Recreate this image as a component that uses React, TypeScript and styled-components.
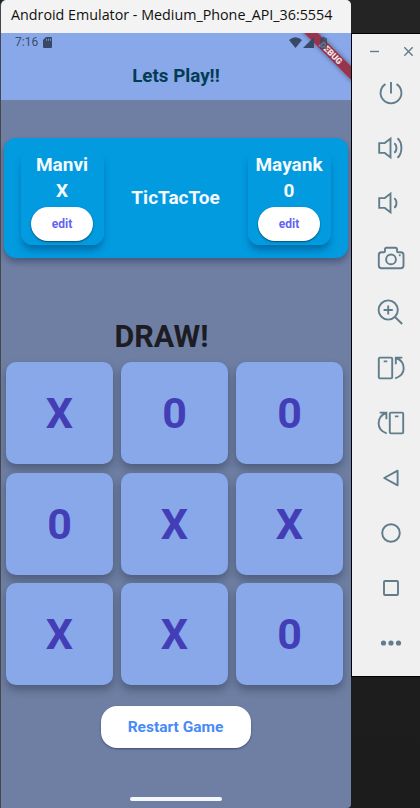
import React from "react";
import styled, { createGlobalStyle } from "styled-components";

const GlobalStyle = createGlobalStyle`
  * { box-sizing: border-box; }
  body { margin: 0; background: #1e1e1e; overflow: hidden; }
`;

const Desktop = styled.div`
  display: flex;
  align-items: flex-start;
  width: 420px;
  height: 808px;
  overflow: hidden;
  background: linear-gradient(#242424, #1c1c1c);
`;

const EmulatorWindow = styled.main`
  display: flex;
  flex-direction: column;
  flex: none;
  width: 351px;
  height: 808px;
  border-left: 1px solid #47474b;
  border-radius: 6px 5px 4px 0;
  overflow: hidden;
  background: #6e7fa3;
  font-family: Roboto, sans-serif;
`;

const TitleBar = styled.header`
  flex: none;
  height: 33px;
  padding-left: 10px;
  background: #f3f3f3;
  color: #101010;
  font: 400 14.3px/30px "Open Sans", "Noto Sans", sans-serif;
  white-space: nowrap;
`;

const Screen = styled.section`
  position: relative;
  display: flex;
  flex-direction: column;
  align-items: center;
  flex: 1;
  overflow: hidden;
`;

const AppBar = styled.div`
  flex: none;
  width: 100%;
  height: 67px;
  background: #88a8ea;
`;

const StatusBar = styled.div`
  position: relative;
  z-index: 1;
  display: flex;
  align-items: center;
  height: 19px;
  padding: 0 24px 0 14px;
  color: #3e4d6c;
  font-size: 12px;
  line-height: 19px;
  letter-spacing: 0px;
`;

const StatusIcon = styled.svg<{ $gap?: number }>`
  display: block;
  flex: none;
  margin-left: ${(p) => p.$gap ?? 0}px;
  fill: #394864;
`;

const Spacer = styled.span`
  flex: 1;
`;

const AppTitle = styled.h1`
  margin: 0;
  padding-top: 13px;
  color: #033c53;
  font-size: 18.8px;
  line-height: 22px;
  font-weight: 700;
  text-align: center;
`;

const DebugRibbon = styled.div`
  position: absolute;
  top: 14.5px;
  right: -32px;
  width: 104px;
  height: 10px;
  transform: rotate(45deg);
  background: rgba(151, 38, 56, 0.88);
  box-shadow: 0 0 5px rgba(0, 0, 0, 0.4);
  color: #f3e6ea;
  font-size: 8.7px;
  line-height: 10px;
  font-weight: 900;
  text-align: center;
`;

const ScoreCard = styled.section`
  display: flex;
  flex: none;
  align-items: center;
  justify-content: space-between;
  width: 344px;
  height: 120px;
  margin-top: 38px;
  margin-right: 1px;
  padding: 0 17px 0 17px;
  border-radius: 12px;
  background: #029be0;
  box-shadow: 0 4px 6px rgba(30, 40, 75, 0.45);
`;

const PlayerBox = styled.div`
  display: flex;
  flex-direction: column;
  align-items: center;
  width: 83px;
  height: 95px;
  margin-top: -2px;
  padding-top: 2px;
  border-radius: 12px;
  background: linear-gradient(#029be0, #029be0);
  box-shadow: 0 6px 7px -1px rgba(0, 40, 90, 0.4);
`;

const CardText = styled.div`
  color: #f4faff;
  font-size: 19px;
  line-height: 26px;
  font-weight: 700;
`;

const EditButton = styled.button`
  width: 62px;
  height: 34px;
  margin-top: 3.5px;
  padding: 0;
  border: 0;
  border-radius: 17px;
  background: #fff;
  box-shadow: 0 1px 2px rgba(0, 0, 0, 0.5);
  color: #6363f4;
  font: 700 12px/34px Roboto, sans-serif;
`;

const Result = styled.h2`
  flex: none;
  margin: 58px 29px 0 0;
  height: 46px;
  color: #1d1c23;
  font-size: 30.5px;
  line-height: 41px;
  font-weight: 700;
`;

const Board = styled.section`
  display: grid;
  flex: none;
  grid-template-columns: repeat(3, 106.5px);
  grid-template-rows: repeat(3, 102px);
  gap: 8.5px;
  margin-right: 3px;
`;

const Cell = styled.button`
  padding: 0;
  border: 0;
  border-radius: 10px;
  background: #88a8ea;
  box-shadow: 0 5px 8px rgba(40, 50, 75, 0.45);
  color: #433eb6;
  font: 700 43px/100px Roboto, sans-serif;
`;

const RestartButton = styled.button`
  flex: none;
  width: 150px;
  height: 42px;
  margin: 21px 1px 0 0;
  padding: 0;
  border: 0;
  border-radius: 16px;
  background: #fff;
  box-shadow: 0 1px 2px rgba(20, 30, 60, 0.5);
  color: #488af8;
  font: 700 15.5px/42px Roboto, sans-serif;
`;

const HomeIndicator = styled.div`
  flex: none;
  width: 92px;
  height: 4px;
  margin: auto 0 7px;
  border-radius: 2px;
  background: #f5f6fa;
`;

const SidePanel = styled.aside`
  display: flex;
  flex: none;
  flex-direction: column;
  width: 69px;
  height: 644px;
  margin-top: 33px;
  border: 1px solid #000;
  border-right: 0;
  background: #f0f0f0;
`;

const Glyph = styled.svg<{ $width: number }>`
  display: block;
  flex: none;
  fill: none;
  stroke: #607d8b;
  stroke-width: ${(p) => p.$width};
`;

const WindowControls = styled.div`
  display: flex;
  flex: none;
  justify-content: space-between;
  height: 44px;
  padding: 12px 6px 0 17px;
`;

const ToolList = styled.div`
  display: flex;
  flex-direction: column;
  gap: 25px;
  padding-left: 24px;
`;

const Speaker = () => <path d="M3.2 10.1h5.6l5.7-4.5v18.8l-5.7-4.5H3.2zM18.2 10.2c3 1.8 3 7.8 0 9.6" />;

const tools = [
  <path key="power" d="M9.5 6.1a10.4 10.4 0 1 0 11 0M15 4v11.5" />,
  <g key="up"><Speaker /><path d="M21.5 5.2c5.2 4.2 5.2 15.4 0 19.6" /></g>,
  <Speaker key="down" />,
  <g key="camera">
    <path d="M5.5 9.3h2.3c1 0 1.2-.4 1.2-1.4V6.3c0-1.2.4-1.6 1.5-1.6h9c1.1 0 1.5.4 1.5 1.6v1.6c0 1 .2 1.4 1.2 1.4h2.6c1.7 0 2.7 1 2.7 2.7v10.5c0 1.7-1 2.7-2.7 2.7H5.5c-1.7 0-2.7-1-2.7-2.7V12c0-1.7 1-2.7 2.7-2.7z" />
    <circle cx="15" cy="16.4" r="4.9" />
    <path d="M22.9 12.3h1.7" />
  </g>,
  <g key="zoom"><circle cx="12.2" cy="12" r="9.6" /><path d="M7.6 12h9.2M12.2 7.4v9.2M19 19l7.2 7" /></g>,
  <g key="left"><rect x="2.8" y="4.6" width="13.4" height="20.8" rx="1.2" /><path d="M7.7 8.4h3.6M26.3 4.6h-6.5v6.7M20 5c10.3 3.8 10.5 17-.8 20.3" /></g>,
  <g key="right"><rect x="13.8" y="4.6" width="13.4" height="20.8" rx="1.2" /><path d="M18.9 8.4h3.6M3.7 4.6h6.7v6.7M10.2 5C.2 8.8-.2 22 10.7 25.3" /></g>,
  <path key="back" strokeLinejoin="round" d="M8.2 15 21.6 7.7v14.6z" />,
  <circle key="home" cx="15" cy="15" r="8.8" />,
  <rect key="recent" x="8" y="8" width="14" height="14" rx="1" />,
  <g key="more" fill="#607d8b" stroke="none"><circle cx="7.5" cy="15" r="2.6" /><circle cx="15" cy="15" r="2.6" /><circle cx="22.5" cy="15" r="2.6" /></g>,
];

const players = [
  { name: "Manvi", mark: "X" },
  { name: "Mayank", mark: "0" },
];

const marks = ["X", "0", "0", "0", "X", "X", "X", "X", "0"];

function Player({ name, mark }: { name: string; mark: string }) {
  return (
    <PlayerBox>
      <CardText>{name}</CardText>
      <CardText>{mark}</CardText>
      <EditButton>edit</EditButton>
    </PlayerBox>
  );
}

export default function App() {
  return (
    <>
      <GlobalStyle />
      <Desktop>
        <EmulatorWindow>
          <TitleBar>Android Emulator - Medium_Phone_API_36:5554</TitleBar>
          <Screen>
            <AppBar>
              <StatusBar>
                7:16
                <StatusIcon $gap={5} width="9" height="11" viewBox="0 0 9 11"><path fillRule="evenodd" d="M3 0h5q1 0 1 1v9q0 1-1 1H1q-1 0-1-1V3zM3 1.8v2h.8v-2zm2 0v2h.8v-2zm2 0v2h.8v-2z" /></StatusIcon>
                <Spacer />
                <StatusIcon width="13" height="11" viewBox="0 0 13 11"><path d="M0 3Q6.5-2.5 13 3L6.5 11z" /></StatusIcon>
                <StatusIcon $gap={1} width="11" height="11" viewBox="0 0 11 11"><path d="M11 0v11H0z" /></StatusIcon>
                <StatusIcon $gap={6} width="7" height="12" viewBox="0 0 7 12"><path d="M2 0h3v1h2v11H0V1h2z" opacity=".75" /></StatusIcon>
              </StatusBar>
              <AppTitle>Lets Play!!</AppTitle>
            </AppBar>
            <DebugRibbon>DEBUG</DebugRibbon>
            <ScoreCard>
              <Player {...players[0]} />
              <CardText>TicTacToe</CardText>
              <Player {...players[1]} />
            </ScoreCard>
            <Result>DRAW!</Result>
            <Board>
              {marks.map((mark, i) => <Cell key={i}>{mark}</Cell>)}
            </Board>
            <RestartButton>Restart Game</RestartButton>
            <HomeIndicator />
          </Screen>
        </EmulatorWindow>
        <SidePanel>
          <WindowControls>
            <Glyph $width={1.4} width="11" height="11" viewBox="0 0 11 11"><path d="M1 5.5h9" /></Glyph>
            <Glyph $width={1.4} width="11" height="11" viewBox="0 0 11 11"><path d="m1.3 1.3 8.4 8.4M9.7 1.3 1.3 9.7" /></Glyph>
          </WindowControls>
          <ToolList>
            {tools.map((icon, i) => (
              <Glyph key={i} $width={1.9} width="30" height="30" viewBox="0 0 30 30">{icon}</Glyph>
            ))}
          </ToolList>
        </SidePanel>
      </Desktop>
    </>
  );
}
